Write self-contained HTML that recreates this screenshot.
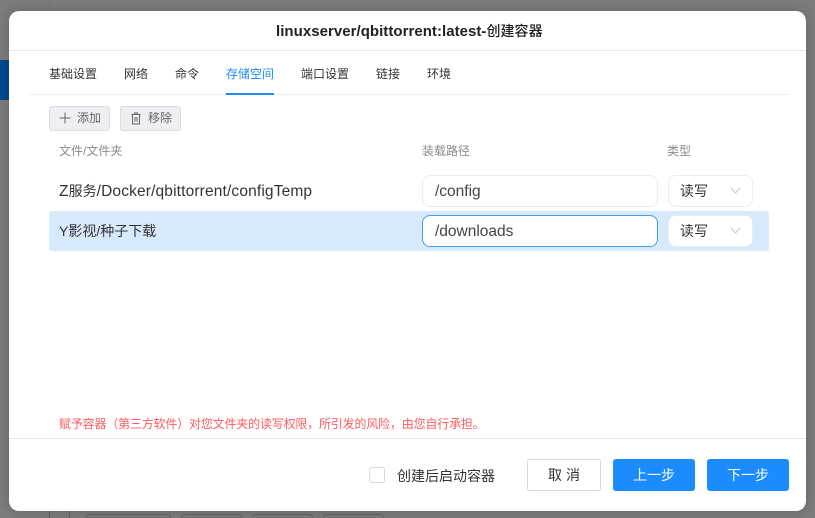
<!DOCTYPE html>
<html lang="zh">
<head>
<meta charset="utf-8">
<style>
*{box-sizing:border-box;margin:0;padding:0}
html,body{width:815px;height:518px;overflow:hidden;background:#7c7c7c;font-family:"Liberation Sans","Noto Sans CJK SC",sans-serif}
.a{position:absolute;white-space:nowrap}
#bg{position:absolute;left:0;top:0;width:815px;height:518px}
#m{position:absolute;left:9px;top:11px;width:797px;height:500px;background:#fff;border-radius:10px;box-shadow:0 0 12px rgba(0,0,0,.2)}
.t{font-size:12px;line-height:16px;color:#333;top:66px}
.h{font-size:12px;line-height:16px;color:#8a8a8a;top:143px}
.btn{top:106px;height:25px;background:#eeeff3;border:1px solid #dcdcdc;border-radius:3px;color:#666;font-size:12px;line-height:23px}
.inp{left:422px;width:236px;height:32px;border:1px solid #ececec;border-radius:8px;background:#fff;font-size:15.5px;line-height:31px;color:#444;padding-left:12px}
.sel{left:668px;width:85px;height:32px;border:1px solid #ececec;border-radius:8px;background:#fff;font-size:14px;line-height:30px;color:#333;padding-left:11px}
.r{font-size:14px;line-height:20px;color:#333;left:59px}
.l{font-size:15.5px;letter-spacing:.15px}
.b{top:459px;height:32px;border-radius:3px;font-size:14px;line-height:32px;text-align:center;background:#1a8cff;color:#fff;width:82px}
</style>
</head>
<body>
<div id="bg">
<div class="a" style="left:49px;top:0;width:1px;height:11px;background:#747474"></div>
<div class="a" style="left:49px;top:511px;width:1px;height:7px;background:#626262"></div>
<div class="a" style="left:69px;top:511px;width:1px;height:7px;background:#626262"></div>
<div class="a" style="left:0;top:60px;width:9px;height:40px;background:#004a8f"></div>
<div class="a" style="left:86px;top:514px;width:85px;height:4px;border:1px solid #626262;border-bottom:0;border-radius:4px 4px 0 0"></div>
<div class="a" style="left:181px;top:514px;width:61px;height:4px;border:1px solid #626262;border-bottom:0;border-radius:4px 4px 0 0"></div>
<div class="a" style="left:252px;top:514px;width:61px;height:4px;border:1px solid #626262;border-bottom:0;border-radius:4px 4px 0 0"></div>
<div class="a" style="left:323px;top:514px;width:61px;height:4px;border:1px solid #626262;border-bottom:0;border-radius:4px 4px 0 0"></div>
</div>
<div id="m"></div>

<div class="a" style="left:276px;top:22px;font-size:15px;letter-spacing:.04px;line-height:18px;font-weight:700;color:#222">linuxserver/qbittorrent:latest-<span style="font-size:14px;font-weight:500">创建容器</span></div>
<div class="a" style="left:9px;top:50px;width:797px;height:1px;background:#e6e6e6"></div>

<div class="a t" style="left:49px">基础设置</div>
<div class="a t" style="left:124px">网络</div>
<div class="a t" style="left:175px">命令</div>
<div class="a t" style="left:226px;color:#1a8cff">存储空间</div>
<div class="a t" style="left:301px">端口设置</div>
<div class="a t" style="left:376px">链接</div>
<div class="a t" style="left:427px">环境</div>
<div class="a" style="left:29px;top:94px;width:760px;height:1px;background:#eeeeee"></div>
<div class="a" style="left:226px;top:93px;width:48px;height:2px;background:#1a8cff"></div>

<div class="a btn" style="left:49px;width:61px;padding-left:27px">添加</div>
<svg class="a" style="left:59px;top:112px" width="12" height="12" viewBox="0 0 12 12"><path d="M6 .5v11M.5 6h11" stroke="#666" stroke-width="1" fill="none"/></svg>
<div class="a btn" style="left:120px;width:61px;padding-left:27px">移除</div>
<svg class="a" style="left:130px;top:112px" width="12" height="13" viewBox="0 0 12 13"><path d="M1.500 2.500h9M4.500 2.500V1h3v1.500M2.500 2.500v9.500h7V2.500M5 5v4.500M7 5v4.500" stroke="#666" stroke-width="1" fill="none"/></svg>

<div class="a h" style="left:59px">文件/文件夹</div>
<div class="a h" style="left:422px">装载路径</div>
<div class="a h" style="left:667px">类型</div>

<div class="a r" style="top:181px"><span class="l">Z</span>服务<span class="l">/Docker/qbittorrent/configTemp</span></div>
<div class="a inp" style="top:175px">/config</div>
<div class="a sel" style="top:175px">读写</div>
<svg class="a" style="left:730px;top:187px" width="11" height="7" viewBox="0 0 11 7"><path d="M.5.500 5.500 6 10.500.500" stroke="#c8c8c8" fill="none"/></svg>

<div class="a" style="left:49px;top:211px;width:720px;height:40px;background:#d7e9fd;border-radius:3px"></div>
<div class="a r" style="top:221px">Y影视/种子下载</div>
<div class="a inp" style="top:215px;border-color:#4a9df0">/downloads</div>
<div class="a sel" style="top:215px">读写</div>
<svg class="a" style="left:730px;top:227px" width="11" height="7" viewBox="0 0 11 7"><path d="M.5.500 5.500 6 10.500.500" stroke="#c8c8c8" fill="none"/></svg>

<div class="a" style="left:59px;top:416px;font-size:12px;letter-spacing:-.18px;line-height:16px;color:#ff5a5f">赋予容器（第三方软件）对您文件夹的读写权限，所引发的风险，由您自行承担。</div>
<div class="a" style="left:9px;top:438px;width:797px;height:1px;background:#e6e6e6"></div>

<div class="a" style="left:369px;top:467px;width:16px;height:16px;border:1px solid #d9d9d9;border-radius:3px;background:#fff"></div>
<div class="a" style="left:397px;top:468px;font-size:14px;line-height:16px;color:#333">创建后启动容器</div>

<div class="a" style="left:527px;top:459px;width:74px;height:32px;background:#fff;border:1px solid #d9d9d9;border-radius:3px"></div>
<div class="a" style="left:548px;top:466px;font-size:14px;line-height:18px;color:#333">取</div>
<div class="a" style="left:566px;top:466px;font-size:14px;line-height:18px;color:#333">消</div>
<div class="a b" style="left:613px">上一步</div>
<div class="a b" style="left:707px">下一步</div>
</body>
</html>
